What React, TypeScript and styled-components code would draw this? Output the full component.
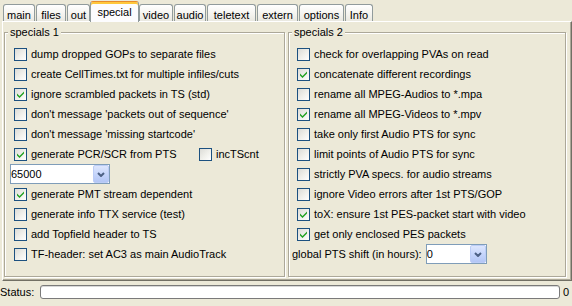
import React from 'react';
import styled, { createGlobalStyle } from 'styled-components';

const GlobalStyle = createGlobalStyle`
  html, body {
    margin: 0;
    padding: 0;
    background: #ece9d8;
  }
  body {
    font-family: "Liberation Sans", Arial, sans-serif;
    font-size: 11px;
    color: #000;
    overflow: hidden;
  }
`;

const Window = styled.div`
  width: 572px;
  height: 306px;
  display: flex;
  flex-direction: column;
  background: #ece9d8;
`;

const TabStrip = styled.div`
  display: flex;
  align-items: flex-end;
  height: 21px;
  padding-left: 2px;
  position: relative;
  z-index: 1;
`;

const Tab = styled.div<{ $w: number; $active?: boolean }>`
  box-sizing: border-box;
  width: ${(p) => p.$w}px;
  height: ${(p) => (p.$active ? 21 : 17)}px;
  margin-left: ${(p) => (p.$active ? 0 : 1)}px;
  margin-right: ${(p) => (p.$active ? -1 : 0)}px;
  margin-bottom: ${(p) => (p.$active ? -1 : 0)}px;
  padding-top: 4px;
  line-height: 13px;
  text-align: center;
  white-space: nowrap;
  border: 1px solid #919b9c;
  border-bottom: none;
  border-radius: 3px 3px 0 0;
  border-top-color: ${(p) => (p.$active ? '#e68b2c' : '#919b9c')};
  background: ${(p) =>
    p.$active ? '#fcfcfe' : 'linear-gradient(#ffffff, #f4f3ee 60%, #e9e8e0)'};
  box-shadow: ${(p) => (p.$active ? 'inset 0 2px 0 #ffc83c' : 'none')};
`;

const Pane = styled.div`
  box-sizing: border-box;
  margin-left: 2px;
  width: 570px;
  height: 260px;
  border-top: 1px solid #fff;
  border-left: 1px solid #fff;
  border-right: 1px solid #716f64;
  border-bottom: 1px solid #716f64;
  box-shadow: inset -1px -1px 0 #aca899;
  padding: 4px 5px 3px 1px;
  display: grid;
  grid-template-columns: 281px 278px;
  column-gap: 3px;
`;

const Group = styled.fieldset`
  box-sizing: border-box;
  margin: 0;
  padding: 0;
  min-width: 0;
  height: 251px;
  border: 1px solid #aca899;
  box-shadow: inset 1px 1px 0 #fff, 1px 1px 0 #fff;
`;

const Legend = styled.legend`
  margin-left: 3px;
  padding: 0 2px;
  line-height: 13px;
  background: #ece9d8;
`;

const GroupBody = styled.div`
  display: flex;
  flex-direction: column;
  padding-top: 5px;
`;

const Row = styled.div<{ $indent: number }>`
  display: flex;
  align-items: center;
  height: 20px;
  padding-left: ${(p) => p.$indent}px;
  line-height: 13px;
  white-space: nowrap;
`;

const SplitRow = styled(Row)`
  display: grid;
  grid-template-columns: 185px auto;
  align-items: center;
`;

const CheckLabel = styled.label`
  display: flex;
  align-items: center;
  gap: 4px;
`;

const Box = styled.span`
  box-sizing: border-box;
  flex: none;
  width: 13px;
  height: 13px;
  border: 1px solid #1c5180;
  background: linear-gradient(135deg, #dcdcd7 0%, #f1f1ec 55%, #ffffff 100%);
  display: flex;
  align-items: center;
  justify-content: center;
`;

const Combo = styled.div<{ $w: number }>`
  box-sizing: border-box;
  width: ${(p) => p.$w}px;
  height: 20px;
  border: 1px solid #7f9db9;
  background: #fff;
  display: flex;
  align-items: stretch;
`;

const ComboValue = styled.span`
  flex: 1;
  line-height: 18px;
  padding-left: 0;
`;

const ComboButton = styled.span`
  box-sizing: border-box;
  width: 16px;
  border: 1px solid #bccdf7;
  border-radius: 2px;
  background: linear-gradient(#dde6fd, #c4d4fb 55%, #b3c6f5);
  display: flex;
  align-items: center;
  justify-content: center;
`;

const FieldLabel = styled.span`
  margin-right: 4px;
`;

const StatusBar = styled.div`
  display: flex;
  align-items: center;
  height: 22px;
`;

const StatusLabel = styled.span`
  width: 40px;
  line-height: 13px;
`;

const StatusField = styled.div`
  box-sizing: border-box;
  flex: 1;
  height: 14px;
  border: 1px solid #7a7a7a;
  border-radius: 3px;
  background: #fff;
  box-shadow: inset 0 1px 0 #d8d8d8;
`;

const Counter = styled.span`
  padding: 0 3px;
  line-height: 13px;
`;

const Check = () => (
  <svg width="7" height="7" viewBox="0 0 7 7">
    <path d="M0 2.5 L2.5 5 L7 0.5 L7 2.5 L2.5 7 L0 4.5 Z" fill="#21a121" />
  </svg>
);

const Chevron = () => (
  <svg width="8" height="5" viewBox="0 0 8 5">
    <path d="M1 1 L4 4 L7 1" stroke="#4d6185" strokeWidth="2" fill="none" />
  </svg>
);

const CheckBox: React.FC<{ checked?: boolean; label: string }> = ({ checked, label }) => (
  <CheckLabel>
    <Box>{checked && <Check />}</Box>
    <span>{label}</span>
  </CheckLabel>
);

const ComboBox: React.FC<{ value: string; width: number }> = ({ value, width }) => (
  <Combo $w={width}>
    <ComboValue>{value}</ComboValue>
    <ComboButton>
      <Chevron />
    </ComboButton>
  </Combo>
);

const tabs = [
  { label: 'main', w: 32 },
  { label: 'files', w: 30 },
  { label: 'out', w: 23 },
  { label: 'special', w: 49, active: true },
  { label: 'video', w: 34 },
  { label: 'audio', w: 32 },
  { label: 'teletext', w: 49 },
  { label: 'extern', w: 41 },
  { label: 'options', w: 45 },
  { label: 'Info', w: 28 },
];

const leftTop = [
  { label: 'dump dropped GOPs to separate files' },
  { label: 'create CellTimes.txt for multiple infiles/cuts' },
  { label: 'ignore scrambled packets in TS (std)', checked: true },
  { label: "don't message 'packets out of sequence'" },
  { label: "don't message 'missing startcode'" },
];

const leftBottom = [
  { label: 'generate PMT stream dependent', checked: true },
  { label: 'generate info TTX service (test)' },
  { label: 'add Topfield header to TS' },
  { label: 'TF-header: set AC3 as main AudioTrack' },
];

const rightRows = [
  { label: 'check for overlapping PVAs on read' },
  { label: 'concatenate different recordings', checked: true },
  { label: 'rename all MPEG-Audios to *.mpa' },
  { label: 'rename all MPEG-Videos to *.mpv', checked: true },
  { label: 'take only first Audio PTS for sync' },
  { label: 'limit points of Audio PTS for sync' },
  { label: 'strictly PVA specs. for audio streams' },
  { label: 'ignore Video errors after 1st PTS/GOP' },
  { label: 'toX: ensure 1st PES-packet start with video', checked: true },
  { label: 'get only enclosed PES packets', checked: true },
];

export default function App() {
  return (
    <Window>
      <GlobalStyle />
      <TabStrip>
        {tabs.map((t) => (
          <Tab key={t.label} $w={t.w} $active={t.active}>
            {t.label}
          </Tab>
        ))}
      </TabStrip>
      <Pane>
        <Group>
          <Legend>specials 1</Legend>
          <GroupBody>
            {leftTop.map((r) => (
              <Row key={r.label} $indent={9}>
                <CheckBox label={r.label} checked={r.checked} />
              </Row>
            ))}
            <SplitRow $indent={9}>
              <CheckBox label="generate PCR/SCR from PTS" checked />
              <CheckBox label="incTScnt" />
            </SplitRow>
            <Row $indent={5}>
              <ComboBox value="65000" width={100} />
            </Row>
            {leftBottom.map((r) => (
              <Row key={r.label} $indent={9}>
                <CheckBox label={r.label} checked={r.checked} />
              </Row>
            ))}
          </GroupBody>
        </Group>
        <Group>
          <Legend>specials 2</Legend>
          <GroupBody>
            {rightRows.map((r) => (
              <Row key={r.label} $indent={8}>
                <CheckBox label={r.label} checked={r.checked} />
              </Row>
            ))}
            <Row $indent={3}>
              <FieldLabel>global PTS shift (in hours):</FieldLabel>
              <ComboBox value="0" width={61} />
            </Row>
          </GroupBody>
        </Group>
      </Pane>
      <StatusBar>
        <StatusLabel>Status:</StatusLabel>
        <StatusField />
        <Counter>0</Counter>
      </StatusBar>
    </Window>
  );
}
